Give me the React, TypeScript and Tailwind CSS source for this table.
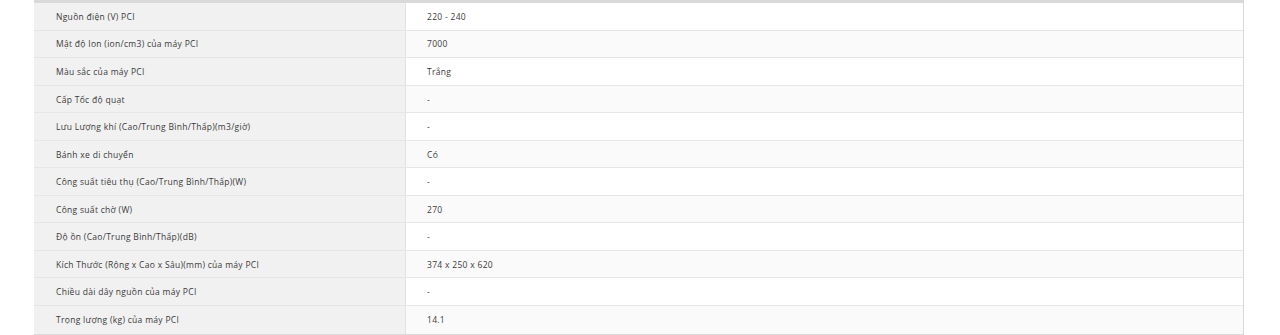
const specs: [string, string][] = [
  ['Nguồn điện (V) PCI', '220 - 240'],
  ['Mật độ Ion (ion/cm3) của máy PCI', '7000'],
  ['Màu sắc của máy PCI', 'Trắng'],
  ['Cấp Tốc độ quạt', '-'],
  ['Lưu Lượng khí (Cao/Trung Bình/Thấp)(m3/giờ)', '-'],
  ['Bánh xe di chuyển', 'Có'],
  ['Công suất tiêu thụ (Cao/Trung Bình/Thấp)(W)', '-'],
  ['Công suất chờ (W)', '270'],
  ['Độ ồn (Cao/Trung Bình/Thấp)(dB)', '-'],
  ['Kích Thước (Rộng x Cao x Sâu)(mm) của máy PCI', '374 x 250 x 620'],
  ['Chiều dài dây nguồn của máy PCI', '-'],
  ['Trọng lượng (kg) của máy PCI', '14.1'],
];

export default function App() {
  return (
    <div className="w-[1280px] h-[335px] bg-white overflow-hidden">
      <div
        className="ml-[34px] w-[1210px] border-t-[3px] border-b-2 border-r border-[#d9d9d9] text-[8.5px] tracking-[0.3px] text-[#3a3a3a]"
        style={{ fontFamily: '"Open Sans", "Noto Sans", sans-serif' }}
      >
        {specs.map(([label, value], i) => (
          <div
            key={label}
            className={`flex h-[27.55px] ${i < specs.length - 1 ? 'border-b border-[#e6e6e6]' : ''}`}
          >
            <div className="w-[372px] shrink-0 flex items-center pl-[22px] pt-[2px] bg-[#f1f1f1] border-r border-[#e2e2e2]">
              {label}
            </div>
            <div
              className={`flex-1 flex items-center pl-[21px] pt-[2px] ${i % 2 === 0 ? 'bg-white' : 'bg-[#fafafa]'}`}
            >
              {value}
            </div>
          </div>
        ))}
      </div>
    </div>
  );
}
